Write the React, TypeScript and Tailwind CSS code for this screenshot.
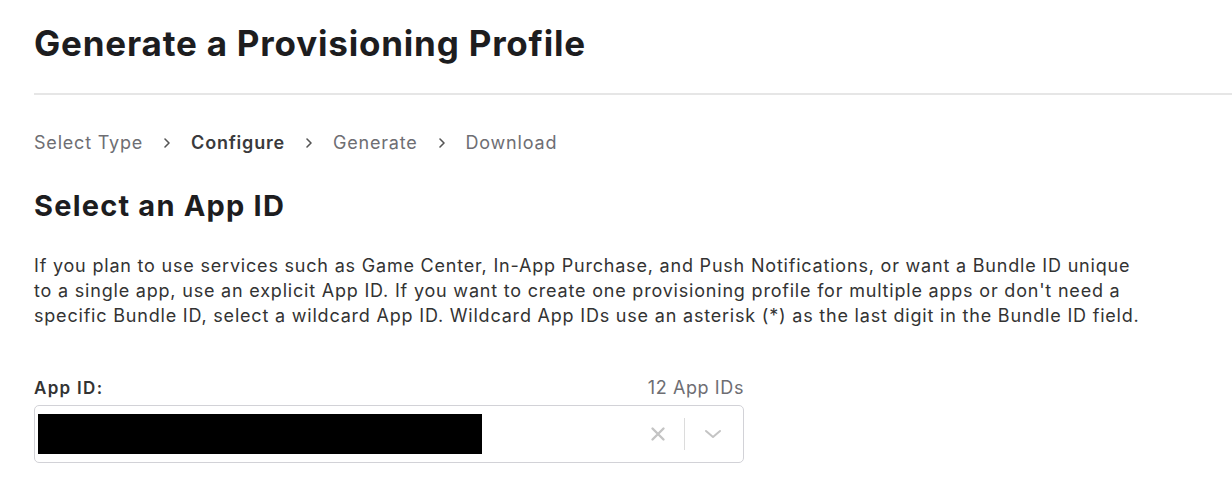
const Chevron = () => (
  <svg width="10" height="14" viewBox="0 0 10 14" fill="none" className="mx-[19px]">
    <path d="M3 3l4 4-4 4" stroke="#555" strokeWidth="1.6" strokeLinecap="round" strokeLinejoin="round" />
  </svg>
);

const steps = [
  { name: "Select Type", active: false },
  { name: "Configure", active: true },
  { name: "Generate", active: false },
  { name: "Download", active: false },
];

export default function App() {
  return (
    <div className="min-h-[493px] bg-white pl-[34px] pt-[21px] font-['Inter',sans-serif] text-[#1d1d1f]">
      <h1 className="text-[35px] font-bold leading-[44px] tracking-[0.8px]">
        Generate a Provisioning Profile
      </h1>
      <div className="mt-[28px] h-[2px] bg-[#e6e6e6]" />

      <div className="mt-[36px] flex items-center text-[18px] leading-[24px] tracking-[0.8px] text-[#6e6e73]">
        {steps.map((step, index) => (
          <div key={step.name} className="flex items-center">
            {index > 0 && <Chevron />}
            <span className={step.active ? "font-semibold text-[#3a3a3c]" : ""}>
              {step.name}
            </span>
          </div>
        ))}
      </div>

      <h2 className="mt-[33px] text-[29px] font-bold leading-[36px] tracking-[1.2px]">Select an App ID</h2>

      <p className="mt-[29px] whitespace-nowrap text-[18px] leading-[25px] tracking-[0.8px] text-[#333]">
        If you plan to use services such as Game Center, In-App Purchase, and Push Notifications, or want a Bundle ID unique
        <br />
        to a single app, use an explicit App ID. If you want to create one provisioning profile for multiple apps or don't need a
        <br />
        specific Bundle ID, select a wildcard App ID. Wildcard App IDs use an asterisk (*) as the last digit in the Bundle ID field.
      </p>

      <div className="mt-[50px] w-[710px]">
        <div className="flex items-end justify-between">
          <label className="text-[17px] font-semibold leading-[20px] tracking-[1.3px] text-[#333]">App ID:</label>
          <span className="text-[18px] leading-[20px] tracking-[0.6px] text-[#6e6e73]">12 App IDs</span>
        </div>
        <div className="mt-[7px] flex h-[58px] items-center rounded-[5px] border border-[#d2d2d7] pl-[3px]">
          <div className="h-[40px] w-[444px] bg-black" />
          <div className="ml-auto flex items-center">
            <svg width="16" height="16" viewBox="0 0 16 16" className="mr-[18px]">
              <path d="M2.5 2.5l11 11M13.5 2.5l-11 11" stroke="#c4c4c4" strokeWidth="2.4" strokeLinecap="round" />
            </svg>
            <div className="h-[32px] w-[1.5px] bg-[#dcdcdc]" />
            <svg width="20" height="12" viewBox="0 0 20 12" className="ml-[18px] mr-[20px]">
              <path d="M3 3l7 6 7-6" stroke="#c4c4c4" strokeWidth="2" fill="none" strokeLinecap="round" strokeLinejoin="round" />
            </svg>
          </div>
        </div>
      </div>
    </div>
  );
}
